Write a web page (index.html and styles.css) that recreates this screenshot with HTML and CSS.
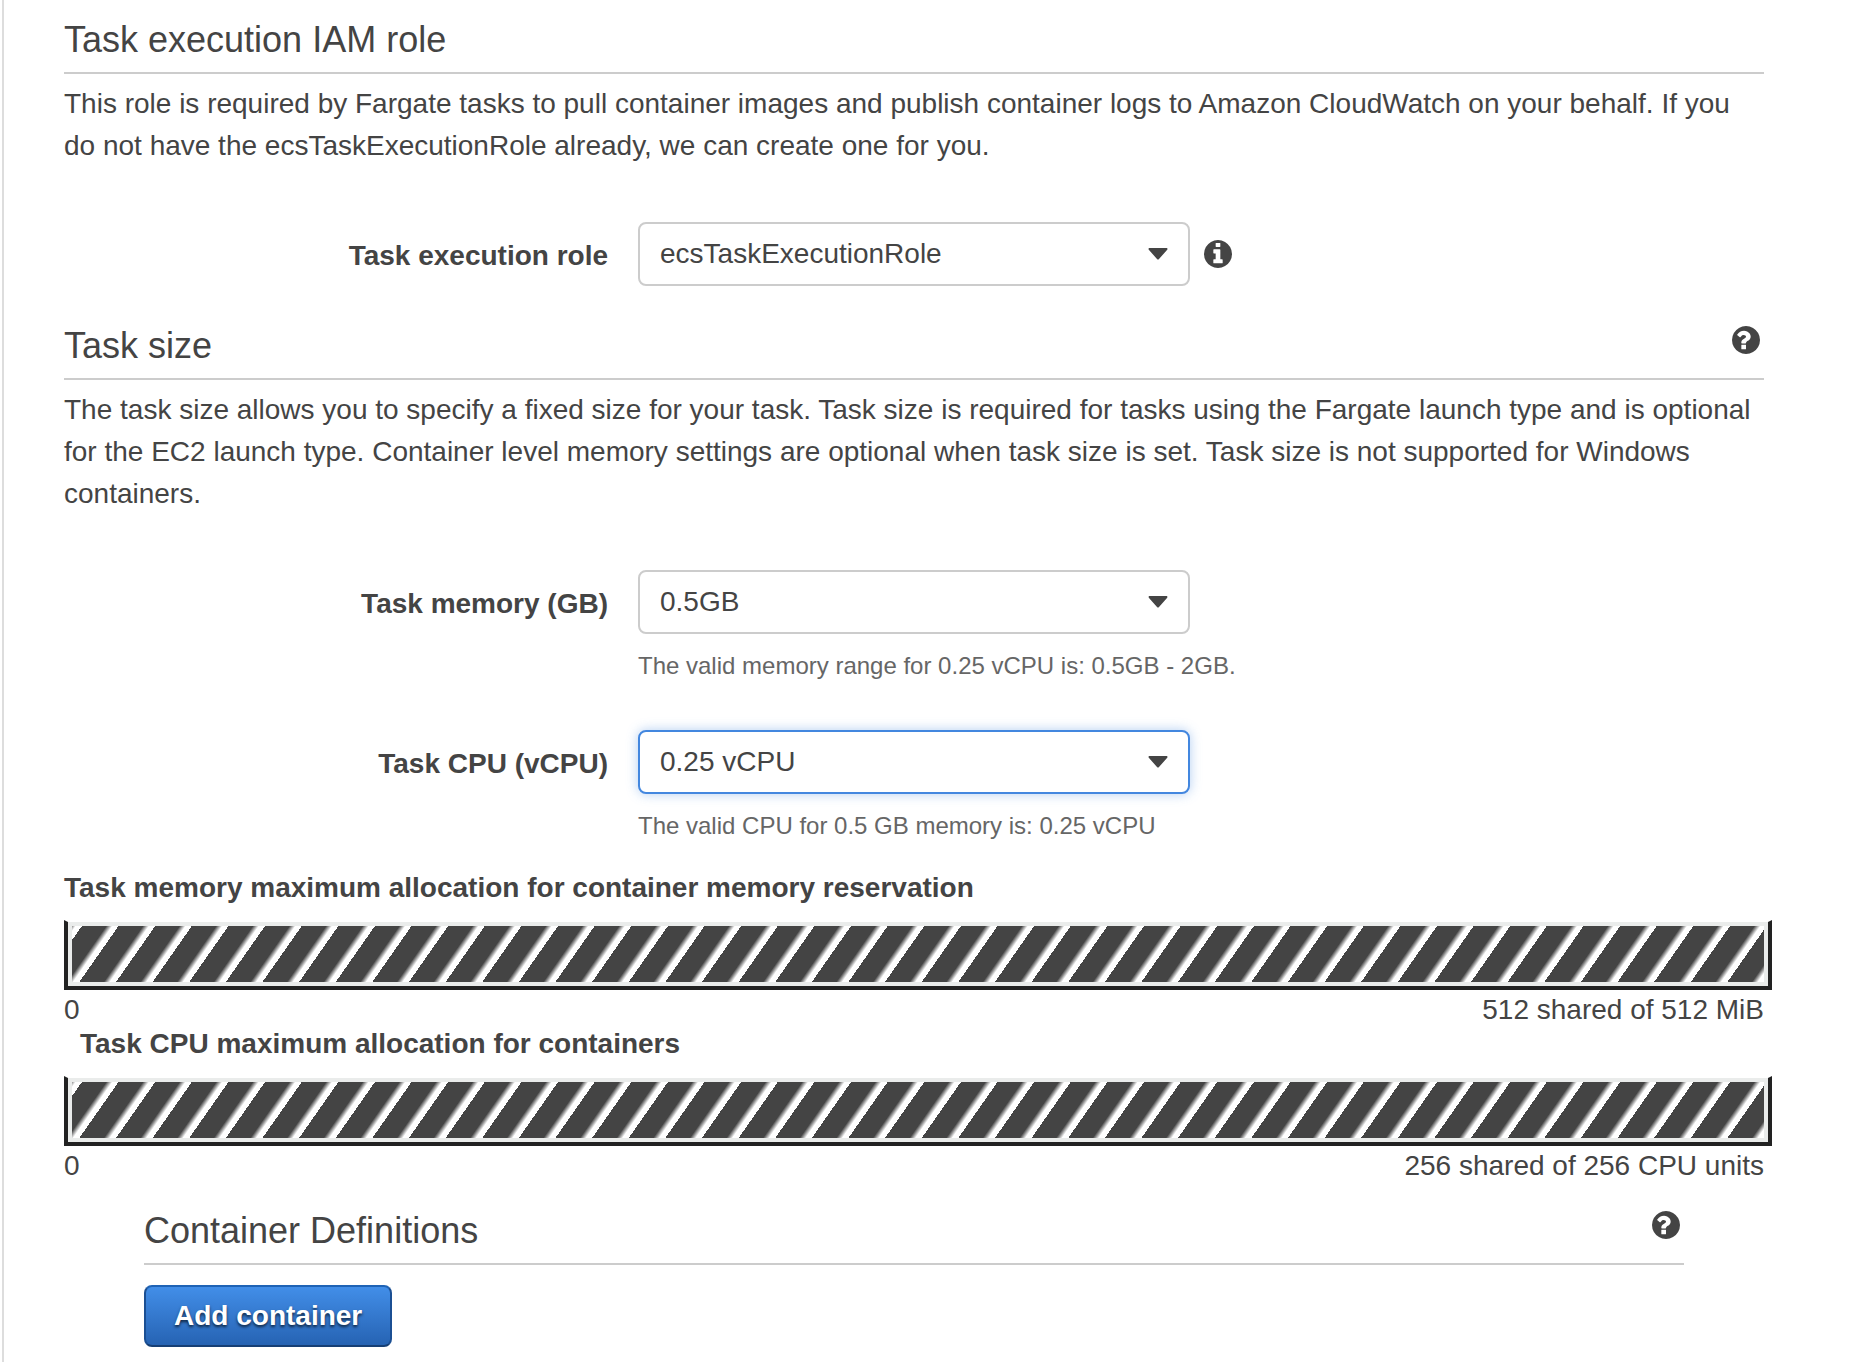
FILE: index.html
```html
<!DOCTYPE html>
<html lang="en">
<head>
<meta charset="utf-8">
<meta name="viewport" content="width=device-width, initial-scale=1">
<title>Create task definition</title>
<link rel="stylesheet" href="styles.css">
</head>
<body>
<svg class="sprite" aria-hidden="true">
  <symbol id="icon-help" viewBox="128 128 1536 1536"><path d="M896 1376v-192q0-14-9-23t-23-9h-192q-14 0-23 9t-9 23v192q0 14 9 23t23 9h192q14 0 23-9t9-23zm256-672q0-88-55.500-163t-138.500-116-170-41q-243 0-371 213-15 24 8 42l132 100q7 6 19 6 16 0 25-12 53-68 86-92 34-24 86-24 48 0 85.500 26t37.500 59q0 38-20 61t-68 45q-63 28-115.500 86.500t-52.500 125.500v36q0 14 9 23t23 9h192q14 0 23-9t9-23q0-19 21.500-49.500t54.500-49.500q32-18 49-28.500t46-35 44.500-48 28-60.500 12.500-81zm512 192q0 209-103 385.500t-279.500 279.500-385.500 103-385.500-103-279.500-279.500-103-385.500 103-385.500 279.500-279.500 385.500-103 385.500 103 279.500 279.500 103 385.500z"/></symbol>
  <symbol id="icon-info" viewBox="128 128 1536 1536"><path d="M1152 1376v-160q0-14-9-23t-23-9h-96v-512q0-14-9-23t-23-9h-320q-14 0-23 9t-9 23v160q0 14 9 23t23 9h96v320h-96q-14 0-23 9t-9 23v160q0 14 9 23t23 9h448q14 0 23-9t9-23zm-128-896v-160q0-14-9-23t-23-9h-192q-14 0-23 9t-9 23v160q0 14 9 23t23 9h192q14 0 23-9t9-23zm640 416q0 209-103 385.500t-279.500 279.500-385.500 103-385.500-103-279.500-279.500-103-385.500 103-385.500 279.500-279.500 385.500-103 385.500 103 279.500 279.500 103 385.500z"/></symbol>
</svg>
<main class="page">
  <section class="section">
    <header class="section-head"><h2>Task execution IAM role</h2></header>
    <p class="intro">This role is required by Fargate tasks to pull container images and publish container logs to Amazon CloudWatch on your behalf. If you do not have the ecsTaskExecutionRole already, we can create one for you.</p>
    <div class="field">
      <label for="role">Task execution role</label>
      <div class="control">
        <select id="role"><option>ecsTaskExecutionRole</option></select>
        <button type="button" class="icon-button" aria-label="About the task execution role"><svg><use href="#icon-info"/></svg></button>
      </div>
    </div>
  </section>

  <section class="section">
    <header class="section-head">
      <h2>Task size</h2>
      <button type="button" class="icon-button" aria-label="Help on task size"><svg><use href="#icon-help"/></svg></button>
    </header>
    <p class="intro">The task size allows you to specify a fixed size for your task. Task size is required for tasks using the Fargate launch type and is optional for the EC2 launch type. Container level memory settings are optional when task size is set. Task size is not supported for Windows containers.</p>
    <div class="field">
      <label for="memory">Task memory (GB)</label>
      <div class="control">
        <select id="memory" aria-describedby="memory-hint"><option>0.5GB</option></select>
      </div>
      <p class="hint" id="memory-hint">The valid memory range for 0.25 vCPU is: 0.5GB - 2GB.</p>
    </div>
    <div class="field">
      <label for="cpu">Task CPU (vCPU)</label>
      <div class="control">
        <select id="cpu" class="active" aria-describedby="cpu-hint"><option>0.25 vCPU</option></select>
      </div>
      <p class="hint" id="cpu-hint">The valid CPU for 0.5 GB memory is: 0.25 vCPU</p>
    </div>
  </section>

  <section class="allocations">
    <h3>Task memory maximum allocation for container memory reservation</h3>
    <div class="bar"><div class="bar-fill"></div></div>
    <div class="scale"><span>0</span><span>512 shared of 512 MiB</span></div>
    <h3 class="indented">Task CPU maximum allocation for containers</h3>
    <div class="bar"><div class="bar-fill"></div></div>
    <div class="scale"><span>0</span><span>256 shared of 256 CPU units</span></div>
  </section>

  <section class="containers">
    <header class="section-head">
      <h2>Container Definitions</h2>
      <button type="button" class="icon-button" aria-label="Help on container definitions"><svg><use href="#icon-help"/></svg></button>
    </header>
    <button type="button" class="primary">Add container</button>
  </section>
</main>
</body>
</html>
```
FILE: styles.css
```css
* {
  box-sizing: border-box;
}

body {
  margin: 0;
  background: #fff;
  color: #444;
  font: 28px/42px "Helvetica Neue", "Liberation Sans", Arial, sans-serif;
}

h2,
h3,
p {
  margin: 0;
}

.sprite {
  display: none;
}

.page {
  min-height: 100vh;
  margin-left: 2px;
  padding: 14px 102px 14px 60px;
  border-left: 2px solid #ddd;
}

.section-head {
  display: flex;
  justify-content: space-between;
  align-items: flex-start;
  padding-bottom: 6px;
  border-bottom: 2px solid #ccc;
}

.section-head h2 {
  font-size: 36px;
  font-weight: 400;
  line-height: 52px;
}

.section-head .icon-button {
  margin: 6px 4px 0 0;
}

.section + .section {
  margin-top: 34px;
}

.intro {
  margin-top: 9px;
}

.field {
  display: grid;
  grid-template-columns: 32% 1fr;
  column-gap: 30px;
  align-items: center;
  margin-top: 46px;
}

.intro + .field {
  margin-top: 55px;
}

.field label {
  padding-top: 4px;
  font-weight: 700;
  text-align: right;
}

.control {
  display: flex;
  align-items: center;
  gap: 14px;
}

select {
  width: 552px;
  height: 64px;
  padding: 0 60px 0 20px;
  border: 2px solid #ccc;
  border-radius: 8px;
  appearance: none;
  background: #fff url("data:image/svg+xml,%3Csvg xmlns='http://www.w3.org/2000/svg' width='20' height='12'%3E%3Cpath d='M1 0h18q1 1 0 2l-8 9q-1 1-2 0L1 2q-1-1 0-2z' fill='%23444'/%3E%3C/svg%3E") no-repeat right 20px center;
  color: inherit;
  font: inherit;
}

select.active {
  border-color: #4387df;
  box-shadow: 0 0 12px rgba(67, 135, 223, 0.4);
}

.hint {
  grid-column: 2;
  margin-top: 14px;
  color: #666;
  font-size: 24px;
  line-height: 36px;
}

.icon-button {
  flex: none;
  width: 28px;
  height: 28px;
  padding: 0;
  border: 0;
  background: none;
  color: inherit;
}

.icon-button svg {
  display: block;
  width: 28px;
  height: 28px;
  fill: currentColor;
}

.allocations {
  margin-top: 27px;
  line-height: 34px;
}

.allocations h3 {
  font-size: 28px;
}

.allocations .indented {
  padding-left: 16px;
}

.bar {
  margin: 15px -8px 3px 0;
  padding: 4px;
  border: 4px solid #222;
  border-top: 2px solid #fff;
  background: #eaeceb;
}

.bar-fill {
  height: 56px;
  background: repeating-linear-gradient(-55deg, #fff 0, #fff 5px, #444 10px, #444 30px);
}

.scale {
  display: flex;
  justify-content: space-between;
}

.containers {
  margin: 22px 80px 0;
}

.primary {
  display: block;
  height: 62px;
  margin-top: 20px;
  padding: 0 28px;
  border: 2px solid #1c5197;
  border-color: #1f63b5 #1b4f93 #163f75;
  border-radius: 8px;
  background: linear-gradient(#428ee8, #2663b3);
  color: #fff;
  font: inherit;
  font-weight: 700;
  text-shadow: 0 2px 3px rgba(0, 0, 0, 0.7);
}
```
